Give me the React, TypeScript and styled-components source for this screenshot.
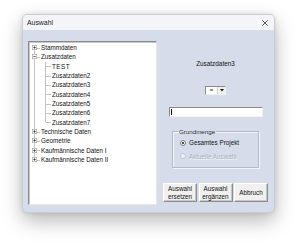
import React from "react";
import styled, { createGlobalStyle } from "styled-components";

const Global = createGlobalStyle`
  html, body { margin: 0; padding: 0; background: #ffffff; }
  body { font-family: "Liberation Sans", Arial, sans-serif; }
  * { box-sizing: border-box; }
`;

const Page = styled.div`
  width: 300px;
  height: 249px;
  padding: 14px 0 0 22px;
`;

const Dialog = styled.div`
  width: 253px;
  height: 199px;
  border-radius: 5px;
  border: 1px solid #c9ccd3;
  overflow: hidden;
  display: flex;
  flex-direction: column;
  background: #d6dcea;
  box-shadow: 0 8px 20px rgba(0, 0, 0, 0.28), 0 0 5px rgba(0, 0, 0, 0.1);
`;

const TitleBar = styled.div`
  height: 15px;
  flex: none;
  background: #f4f5f8;
  display: flex;
  align-items: center;
  justify-content: space-between;
  padding: 0 6px 0 4px;
`;

const Title = styled.span`
  font-size: 6.9px;
  color: #1a1a1a;
`;

const Body = styled.div`
  flex: 1;
  display: grid;
  grid-template-columns: 129px 1fr;
  padding: 11px 0 7px 5px;
`;

const Tree = styled.div`
  background: #ffffff;
  border-top: 1px solid #8a8a8a;
  border-left: 1px solid #8a8a8a;
  border-right: 1px solid #e4e6ea;
  border-bottom: 1px solid #e4e6ea;
  box-shadow: inset 1px 1px 0 #c8c8c8;
  display: flex;
  flex-direction: column;
  padding-top: 1px;
`;

const Row = styled.div`
  height: 9.33px;
  display: flex;
  align-items: stretch;
`;

type CellProps = { $v: "full" | "top" | "bottom" | "none"; $h?: boolean };

const Cell = styled.div<CellProps>`
  width: 11px;
  flex: none;
  position: relative;
  &::before {
    content: "";
    position: absolute;
    left: 5px;
    width: 0;
    border-left: 1px solid #c4c4c4;
    display: ${(p) => (p.$v === "none" ? "none" : "block")};
    top: ${(p) => (p.$v === "bottom" ? "50%" : "0")};
    bottom: ${(p) => (p.$v === "top" ? "50%" : "0")};
  }
  &::after {
    content: "";
    position: absolute;
    left: 6px;
    right: 0;
    top: 50%;
    border-top: 1px solid #c4c4c4;
    display: ${(p) => (p.$h ? "block" : "none")};
  }
`;

const BoxIcon = styled.svg`
  position: absolute;
  left: 2.5px;
  top: 50%;
  margin-top: -2.5px;
  z-index: 1;
`;

const Label = styled.span<{ $spaced?: boolean }>`
  font-size: 6.3px;
  line-height: 9.33px;
  color: #111;
  margin-left: 1px;
  white-space: nowrap;
  letter-spacing: ${(p) => (p.$spaced ? "0.5px" : "0")};
`;

const Right = styled.div`
  display: flex;
  flex-direction: column;
  align-items: center;
`;

const Caption = styled.div`
  margin-top: 19px;
  font-size: 6.4px;
  line-height: 8px;
  color: #111;
`;

const Combo = styled.div`
  margin-top: 18px;
  width: 21px;
  height: 9px;
  background: #fff;
  border-top: 1px solid #8a8a8a;
  border-left: 1px solid #8a8a8a;
  border-right: 1px solid #f2f2f2;
  border-bottom: 1px solid #f2f2f2;
  display: flex;
  align-items: stretch;
`;

const ComboText = styled.span`
  flex: 1;
  font-size: 6px;
  line-height: 7px;
  text-align: center;
  color: #222;
`;

const ComboButton = styled.div`
  width: 8px;
  background: #f0f0f0;
  border-left: 1px solid #d8d8d8;
  display: flex;
  align-items: center;
  justify-content: center;
`;

const Input = styled.div`
  margin-top: 12px;
  width: 94px;
  height: 10px;
  background: #fff;
  border-top: 1px solid #8a8a8a;
  border-left: 1px solid #8a8a8a;
  border-right: 1px solid #f2f2f2;
  border-bottom: 1px solid #f2f2f2;
  display: flex;
  align-items: center;
  padding-left: 1px;
`;

const Caret = styled.span`
  width: 1px;
  height: 6px;
  background: #000;
`;

const Group = styled.fieldset`
  margin: 11px 0 0 0;
  width: 87px;
  height: 40px;
  padding: 1px 0 0 7px;
  border: 1px solid #b2b8c6;
  box-shadow: 1px 1px 0 #f4f6fa, inset 1px 1px 0 #f4f6fa;
  display: flex;
  flex-direction: column;
`;

const Legend = styled.legend`
  font-size: 6.2px;
  line-height: 7px;
  padding: 0 1px;
  margin-left: -2px;
  color: #222;
`;

const RadioRow = styled.div`
  display: flex;
  align-items: center;
  height: 13.5px;
  gap: 3px;
`;

const RadioDot = styled.span<{ $checked?: boolean; $disabled?: boolean }>`
  width: 6px;
  height: 6px;
  border-radius: 50%;
  background: ${(p) => (p.$disabled ? "#eef0f5" : "#fff")};
  border: 1px solid ${(p) => (p.$disabled ? "#c3c8d2" : "#7d7d7d")};
  display: flex;
  align-items: center;
  justify-content: center;
  &::after {
    content: "";
    width: 2px;
    height: 2px;
    border-radius: 50%;
    background: #111;
    display: ${(p) => (p.$checked ? "block" : "none")};
  }
`;

const RadioText = styled.span<{ $disabled?: boolean }>`
  font-size: 6.3px;
  color: ${(p) => (p.$disabled ? "#aab0be" : "#111")};
  text-shadow: ${(p) => (p.$disabled ? "0.5px 0.5px 0 #f7f8fb" : "none")};
`;

const Buttons = styled.div`
  margin-top: 15px;
  display: flex;
  gap: 1.5px;
`;

const Button = styled.button`
  width: 34px;
  height: 19px;
  padding: 0;
  margin: 0;
  background: #f0f0f0;
  border-top: 1px solid #ffffff;
  border-left: 1px solid #ffffff;
  border-right: 1px solid #8c8c8c;
  border-bottom: 1px solid #8c8c8c;
  box-shadow: inset -1px -1px 0 #c8c8c8;
  font-family: "Liberation Sans", Arial, sans-serif;
  font-size: 6.3px;
  line-height: 8px;
  color: #111;
  text-align: center;
`;

type Node = {
  label: string;
  cells: CellProps[];
  box?: "+" | "-";
  spaced?: boolean;
};

const child = (label: string, last = false, spaced = false): Node => ({
  label,
  spaced,
  cells: [{ $v: "full" }, { $v: last ? "top" : "full", $h: true }],
});

const nodes: Node[] = [
  { label: "Stammdaten", box: "+", cells: [{ $v: "bottom", $h: true }] },
  { label: "Zusatzdaten", box: "-", cells: [{ $v: "full", $h: true }] },
  child("TEST", false, true),
  child("Zusatzdaten2"),
  child("Zusatzdaten3"),
  child("Zusatzdaten4"),
  child("Zusatzdaten5"),
  child("Zusatzdaten6"),
  child("Zusatzdaten7", true),
  { label: "Technische Daten", box: "+", cells: [{ $v: "full", $h: true }] },
  { label: "Geometrie", box: "+", cells: [{ $v: "full", $h: true }] },
  { label: "Kaufmännische Daten I", box: "+", cells: [{ $v: "full", $h: true }] },
  { label: "Kaufmännische Daten II", box: "+", cells: [{ $v: "top", $h: true }] },
];

const Box = ({ sign }: { sign: "+" | "-" }) => (
  <BoxIcon width="5" height="5" viewBox="0 0 10 10">
    <rect x="0.5" y="0.5" width="9" height="9" fill="#fff" stroke="#8c8c8c" strokeWidth="1" />
    <line x1="2.5" y1="5" x2="7.5" y2="5" stroke="#111" strokeWidth="1.2" />
    {sign === "+" && <line x1="5" y1="2.5" x2="5" y2="7.5" stroke="#111" strokeWidth="1.2" />}
  </BoxIcon>
);

export default function App() {
  return (
    <>
      <Global />
      <Page>
        <Dialog>
          <TitleBar>
            <Title>Auswahl</Title>
            <svg width="6" height="6" viewBox="0 0 6 6">
              <path d="M0.3 0.3 L5.7 5.7 M5.7 0.3 L0.3 5.7" stroke="#333" strokeWidth="0.8" />
            </svg>
          </TitleBar>
          <Body>
            <Tree>
              {nodes.map((n) => (
                <Row key={n.label}>
                  {n.cells.map((c, i) => (
                    <Cell key={i} $v={c.$v} $h={c.$h}>
                      {i === 0 && n.box && <Box sign={n.box} />}
                    </Cell>
                  ))}
                  <Label $spaced={n.spaced}>{n.label}</Label>
                </Row>
              ))}
            </Tree>
            <Right>
              <Caption>Zusatzdaten3</Caption>
              <Combo>
                <ComboText>=</ComboText>
                <ComboButton>
                  <svg width="4" height="3" viewBox="0 0 4 3">
                    <path d="M0 0 L4 0 L2 2.5 Z" fill="#111" />
                  </svg>
                </ComboButton>
              </Combo>
              <Input>
                <Caret />
              </Input>
              <Group>
                <Legend>Grundmenge</Legend>
                <RadioRow>
                  <RadioDot $checked />
                  <RadioText>Gesamtes Projekt</RadioText>
                </RadioRow>
                <RadioRow>
                  <RadioDot $disabled />
                  <RadioText $disabled>Aktuelle Auswahl</RadioText>
                </RadioRow>
              </Group>
              <Buttons>
                <Button>
                  Auswahl
                  <br />
                  ersetzen
                </Button>
                <Button>
                  Auswahl
                  <br />
                  ergänzen
                </Button>
                <Button>Abbruch</Button>
              </Buttons>
            </Right>
          </Body>
        </Dialog>
      </Page>
    </>
  );
}
